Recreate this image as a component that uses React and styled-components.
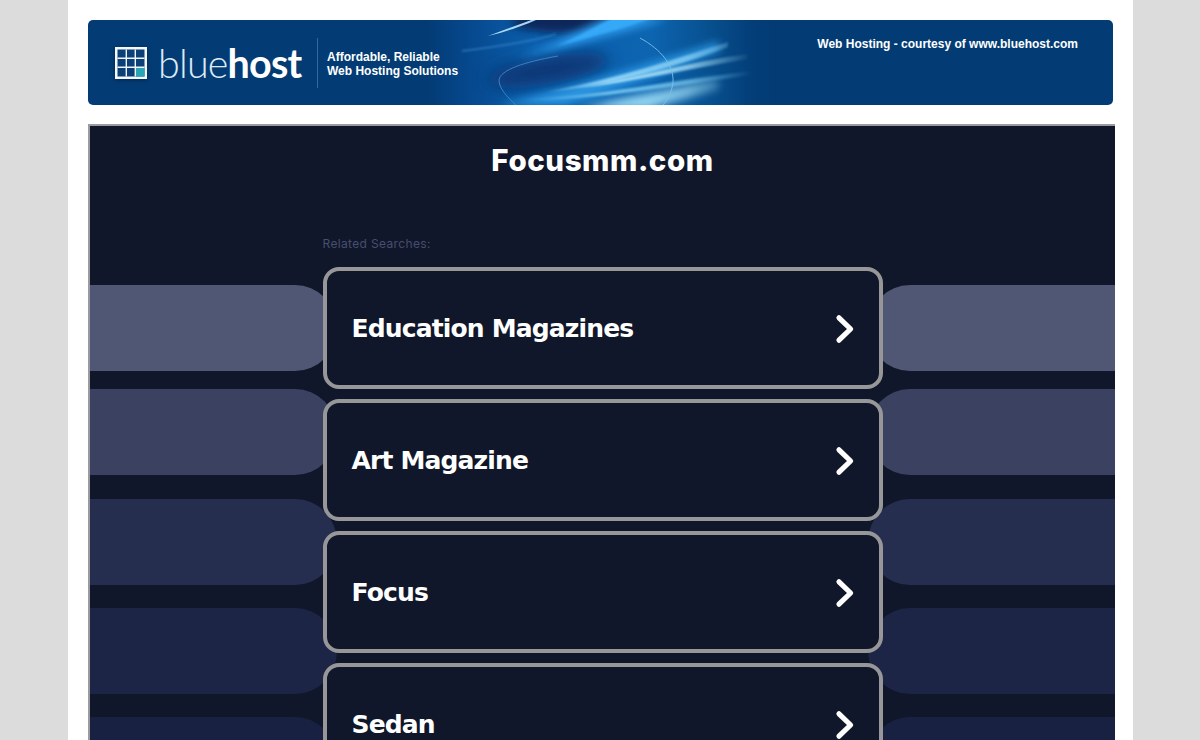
import React from "react";
import styled, { createGlobalStyle } from "styled-components";

const searches = ["Education Magazines", "Art Magazine", "Focus", "Sedan"];

const bands = [
  { color: "#4f5774", gap: 18 },
  { color: "#3b4261", gap: 24 },
  { color: "#262e50", gap: 23 },
  { color: "#1c2545", gap: 23 },
  { color: "#192142", gap: 23 },
];

const GlobalStyle = createGlobalStyle`
  html, body {
    margin: 0;
    height: 740px;
    overflow: hidden;
    background: #dcdcdc;
  }
`;

const Page = styled.div`
  width: 1065px;
  height: 740px;
  margin-left: 68px;
  padding: 20px 20px 0;
  box-sizing: border-box;
  background: #fff;
  overflow: hidden;
`;

const Banner = styled.header`
  position: relative;
  display: flex;
  align-items: center;
  width: 1025px;
  height: 85px;
  padding-left: 27px;
  box-sizing: border-box;
  border-radius: 5px;
  background: #033c75;
  overflow: hidden;
  font-family: "Liberation Sans", Arial, sans-serif;
`;

const BannerArt = styled.svg`
  position: absolute;
  left: 340px;
  top: 0;
`;

const Logo = styled.div`
  position: relative;
  display: flex;
  align-items: center;
  gap: 11px;
  width: 202px;
`;

const LogoMark = styled.svg`
  flex: none;
  filter: drop-shadow(0 1px 2px rgba(0, 20, 50, 0.6));
`;

const LogoWord = styled.div`
  font-family: Lato, sans-serif;
  font-size: 39.5px;
  line-height: 1;
  letter-spacing: -0.8px;
  color: #dfeaf4;
  font-weight: 300;
  b {
    font-weight: 700;
    color: #fff;
  }
`;

const Divider = styled.div`
  position: relative;
  width: 1px;
  height: 50px;
  margin: 1px 9px 0 0;
  background: #2e6a9e;
`;

const Tagline = styled.div`
  position: relative;
  margin-top: 3px;
  color: #fff;
  font-size: 12px;
  font-weight: 700;
  line-height: 14px;
`;

const Courtesy = styled.div`
  position: absolute;
  top: 17px;
  right: 35px;
  color: #fff;
  font-size: 12px;
  font-weight: 700;
  line-height: 14px;
`;

const Frame = styled.main`
  position: relative;
  width: 1027px;
  height: 640px;
  margin-top: 19px;
  box-sizing: border-box;
  border-top: 2px solid #9a9a9f;
  border-left: 2px solid #9a9a9f;
  background: #10172a;
  overflow: hidden;
`;

const BandColumn = styled.div`
  position: absolute;
  top: 159px;
  ${(p) => (p.$side === "left" ? "left: 0;" : "right: 0;")}
  width: 247px;
  display: flex;
  flex-direction: column;
`;

const Band = styled.div`
  flex: none;
  height: 86px;
  margin-bottom: ${(p) => p.$gap}px;
  background: ${(p) => p.$color};
  border-radius: ${(p) =>
    p.$side === "left" ? "0 42px 42px 0 / 0 43px 43px 0" : "42px 0 0 42px / 43px 0 0 43px"};
`;

const Content = styled.div`
  position: relative;
  display: flex;
  flex-direction: column;
  align-items: center;
`;

const Title = styled.h1`
  margin: 16px 0 0;
  color: #fff;
  font-family: Inter, "Open Sans", sans-serif;
  font-size: 29.5px;
  font-weight: 800;
  letter-spacing: 0.55px;
  line-height: 36px;
`;

const Results = styled.section`
  width: 560px;
  margin-top: 59px;
`;

const Related = styled.div`
  height: 30px;
  color: #474e6e;
  font-family: Inter, sans-serif;
  font-size: 12px;
  letter-spacing: 0.35px;
  line-height: 14px;
`;

const Card = styled.a`
  display: flex;
  align-items: center;
  justify-content: space-between;
  height: 122px;
  margin-bottom: 10px;
  padding: 0 24px 0 25px;
  box-sizing: border-box;
  border: 4px solid #979799;
  border-radius: 16px;
  background: #10172a;
  color: #fff;
  font-family: "DejaVu Sans", Verdana, sans-serif;
  font-size: 25px;
  font-weight: 700;
  letter-spacing: -0.85px;
`;

const ChevronIcon = styled.svg`
  flex: none;
  margin-top: 1px;
`;

const Chevron = () => (
  <ChevronIcon width="20" height="30" viewBox="0 0 20 30">
    <polyline
      points="4,3.8 15.6,15 4,26.2"
      fill="none"
      stroke="#fff"
      strokeWidth="5.2"
      strokeLinecap="round"
      strokeLinejoin="round"
    />
  </ChevronIcon>
);

const GridMark = () => (
  <LogoMark width="32" height="32" viewBox="0 0 32 32">
    <rect width="32" height="32" fill="#f4f8fb" />
    <rect x="2.5" y="2.5" width="27" height="27" fill="#0a3f78" />
    <path d="M11.3 2.5v27M20.3 2.5v27M2.5 11.3h27M2.5 20.3h27" stroke="#eef4f8" strokeWidth="1.4" />
    <rect x="21" y="21" width="8.5" height="8.5" fill="#2aa5b5" />
  </LogoMark>
);

const Blur = ({ id, size }) => (
  <filter id={id} filterUnits="userSpaceOnUse" x="-40" y="-40" width="440" height="165">
    <feGaussianBlur stdDeviation={size} />
  </filter>
);

const Swoosh = () => (
  <BannerArt width="360" height="85" viewBox="0 0 360 85">
    <defs>
      <linearGradient id="base" x1="0" x2="1" y1="0" y2="0">
        <stop offset="0" stopColor="#033c75" />
        <stop offset="0.08" stopColor="#054487" />
        <stop offset="0.3" stopColor="#0b60ae" />
        <stop offset="0.62" stopColor="#0d64b0" />
        <stop offset="0.78" stopColor="#07508f" />
        <stop offset="0.9" stopColor="#033e78" />
        <stop offset="0.96" stopColor="#033c75" />
      </linearGradient>
      <linearGradient id="rayFade" x1="0" x2="360" y1="0" y2="0" gradientUnits="userSpaceOnUse">
        <stop offset="0.2" stopColor="#fff" stopOpacity="0" />
        <stop offset="0.5" stopColor="#fff" stopOpacity="1" />
        <stop offset="0.72" stopColor="#fff" stopOpacity="0.75" />
        <stop offset="0.9" stopColor="#fff" stopOpacity="0" />
      </linearGradient>
      <mask id="rays" maskUnits="userSpaceOnUse" x="0" y="0" width="360" height="85">
        <rect width="360" height="85" fill="url(#rayFade)" />
      </mask>
      <Blur id="b1" size={0.6} />
      <Blur id="b2" size={1.3} />
      <Blur id="b3" size={4} />
      <Blur id="b6" size={8} />
    </defs>
    <rect width="360" height="85" fill="url(#base)" />
    <ellipse cx="135" cy="2" rx="52" ry="11" fill="#07255a" filter="url(#b3)" />
    <ellipse cx="120" cy="50" rx="62" ry="15" transform="rotate(-10 120 50)" fill="#073777" filter="url(#b6)" />
    <path d="M85 40C130 28 190 14 240 -2H178C150 12 118 28 85 40Z" fill="#2f9ff0" filter="url(#b3)" />
    <path d="M128 26C160 18 195 8 225 -2H185C165 8 148 18 128 26Z" fill="#35a9f8" filter="url(#b2)" />
    <path d="M60 16C75 10 90 5 106 -1L108 0C92 7 76 12 60 16Z" fill="#a8d8f6" filter="url(#b1)" />
    <path d="M34 31C75 26 110 20 128 14" stroke="#3f8fd2" strokeWidth="1" fill="none" filter="url(#b2)" />
    <path d="M70 85C130 72 200 50 290 22L292 30C230 56 170 76 135 85Z" fill="#2a95e2" filter="url(#b3)" />
    <g mask="url(#rays)">
      <path d="M118 72C175 62 240 42 300 22L300 27C245 48 180 66 118 72Z" fill="#8ed2f4" filter="url(#b2)" />
      <path d="M150 68C205 58 260 42 320 34L320 39C265 48 205 62 150 68Z" fill="#a9e0f8" filter="url(#b2)" />
      <path d="M95 80C165 76 250 60 330 50L330 54C250 66 165 80 95 80Z" fill="#6cc0ec" filter="url(#b2)" />
      <path d="M150 88C190 80 245 68 290 60L292 68C260 78 235 84 222 89Z" fill="#a6e4fa" filter="url(#b3)" />
    </g>
    <path d="M212 18C234 30 246 46 245 62C244 72 240 79 235 85" stroke="#79c0e8" strokeWidth="0.9" fill="none" filter="url(#b1)" />
    <path d="M130 36C96 42 72 50 71 60C71 68 78 76 88 85" stroke="#3a8ac9" strokeWidth="0.9" fill="none" filter="url(#b1)" />
  </BannerArt>
);

export default function App() {
  return (
    <>
      <GlobalStyle />
      <Page>
        <Banner>
          <Swoosh />
          <Logo>
            <GridMark />
            <LogoWord>
              blue<b>host</b>
            </LogoWord>
          </Logo>
          <Divider />
          <Tagline>
            Affordable, Reliable
            <br />
            Web Hosting Solutions
          </Tagline>
          <Courtesy>Web Hosting - courtesy of www.bluehost.com</Courtesy>
        </Banner>
        <Frame>
          {["left", "right"].map((side) => (
            <BandColumn key={side} $side={side}>
              {bands.map((b) => (
                <Band key={b.color} $side={side} $color={b.color} $gap={b.gap} />
              ))}
            </BandColumn>
          ))}
          <Content>
            <Title>Focusmm.com</Title>
            <Results>
              <Related>Related Searches:</Related>
              {searches.map((s) => (
                <Card key={s}>
                  {s}
                  <Chevron />
                </Card>
              ))}
            </Results>
          </Content>
        </Frame>
      </Page>
    </>
  );
}
